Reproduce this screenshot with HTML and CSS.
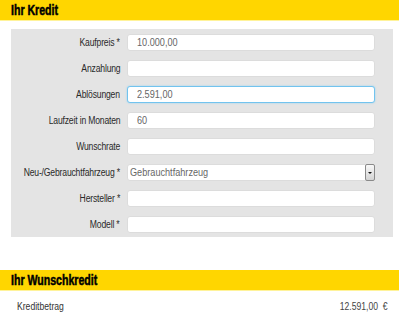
FILE: index.html
```html
<!DOCTYPE html>
<html lang="de">
<head>
  <meta charset="UTF-8" />
  <title>Ihr Kredit</title>
  <link rel="stylesheet" href="styles.css">
</head>
<body>
  <!-- Kredit -->
  <h2 class="bar"><span>Ihr Kredit</span></h2>
  <div class="panel">
    <div class="row"><label><span>Kaufpreis *</span></label><div class="field"><span>10.000,00</span></div></div>
    <div class="row"><label><span>Anzahlung</span></label><div class="field"></div></div>
    <div class="row"><label><span>Ablösungen</span></label><div class="field focus"><span>2.591,00</span></div></div>
    <div class="row"><label><span>Laufzeit in Monaten</span></label><div class="field"><span>60</span></div></div>
    <div class="row"><label><span>Wunschrate</span></label><div class="field"></div></div>
    <div class="row"><label><span>Neu-/Gebrauchtfahrzeug *</span></label><div class="field select"><span>Gebrauchtfahrzeug</span><i class="arrow"></i></div></div>
    <div class="row"><label><span>Hersteller *</span></label><div class="field"></div></div>
    <div class="row"><label><span>Modell *</span></label><div class="field"></div></div>
  </div>

  <!-- Wunschkredit -->
  <h2 class="bar second"><span>Ihr Wunschkredit</span></h2>
  <div class="sum"><span class="l">Kreditbetrag</span><span class="r">12.591,00 &nbsp;€</span></div>
</body>
</html>
```

FILE: styles.css
```css
body, html { margin:0; padding:0; background:#fff; font-family:'Liberation Sans',Arial,sans-serif; color:#333; }
/* gelbe Kopfzeilen */
.bar { margin:0; height:21px; line-height:21px; padding-left:11px; background:#ffd600; border-bottom:1px solid #fff39a; box-sizing:border-box;
  font-size:14.5px; font-weight:bold; color:#000; }
.bar span { display:inline-block; transform:scaleX(0.73); transform-origin:left center; -webkit-text-stroke:0.5px #000; }
.bar.second { margin-top:33px; }
/* Formular */
.panel { margin:8px 6px 0 11px; padding:5px 18px 4px 0; background:#e4e4e4; display:flex; flex-direction:column; gap:9px; }
.row { display:flex; align-items:center; gap:7px; }
.row label { width:109px; flex:none; display:flex; justify-content:flex-end; font-size:10px; color:#2a2a2a; white-space:nowrap; letter-spacing:-0.2px; }
.row label span { display:inline-block; transform:scaleX(0.86); transform-origin:right center; }
.field { flex:1; height:17px; box-sizing:border-box; background:#fff; border:1px solid #dcdcdc; border-radius:3px; padding:0 9px;
  font-size:10.5px; line-height:15px; color:#666; position:relative; white-space:nowrap; }
.field span { display:inline-block; transform:scaleX(0.87); transform-origin:left center; }
.field.focus { border-color:#72c3ee; box-shadow:0 0 2px #8fd0f2; }
.field.select { padding-left:2px; }
.arrow { position:absolute; right:-1px; top:-1px; width:8px; height:15px; border:1px solid #8a8a8a; border-radius:2px; background:linear-gradient(#f8f8f8,#d4d4d4); }
.arrow::after { content:''; position:absolute; left:2px; top:7px; border-left:2px solid transparent; border-right:2px solid transparent; border-top:2px solid #111; }
/* Summe */
.sum { display:flex; justify-content:space-between; padding:10px 11px 0 17px; font-size:10px; color:#333; }
.sum .l { display:inline-block; transform:scaleX(0.86); transform-origin:left center; }
.sum .r { display:inline-block; transform:scaleX(0.86); transform-origin:right center; color:#444; }
```
